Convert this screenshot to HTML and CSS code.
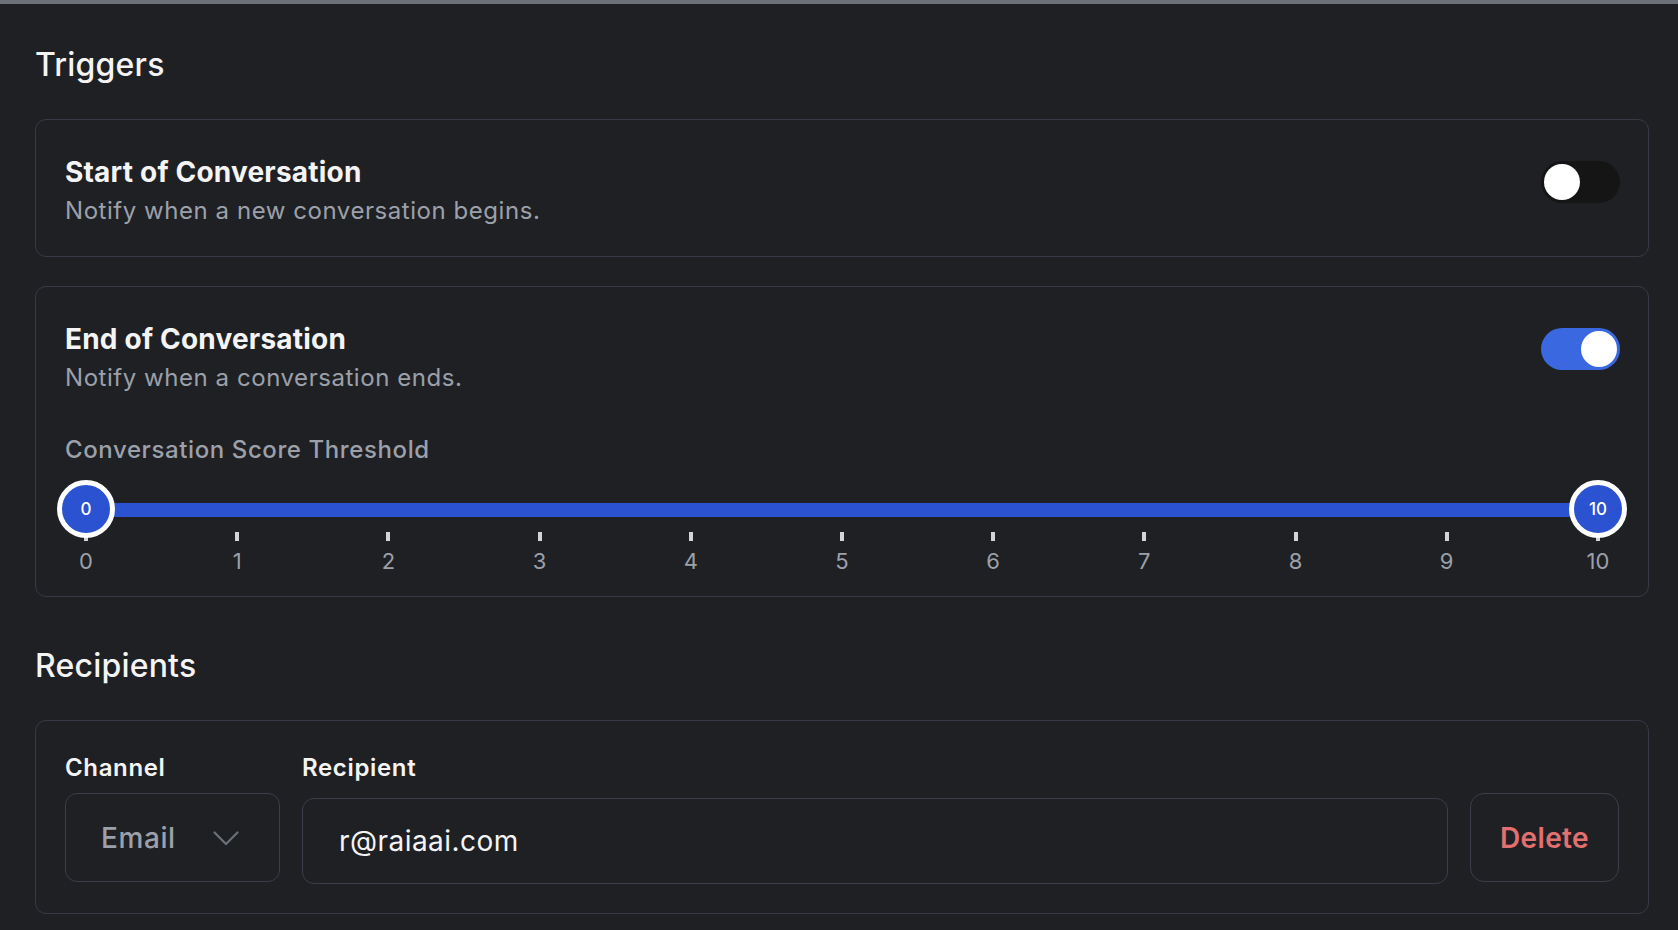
FILE: index.html
```html
<!DOCTYPE html>
<html lang="en">
<head>
<meta charset="utf-8">
<title>Triggers</title>
<link rel="stylesheet" href="styles.css">
</head>
<body>
<div class="topbar"></div>
<main class="page">
  <h2 class="section-title">Triggers</h2>

  <section class="card">
    <div class="trigger-row">
      <div class="trigger-text">
        <h3 class="trigger-title">Start of Conversation</h3>
        <p class="trigger-desc">Notify when a new conversation begins.</p>
      </div>
      <span class="toggle"><span class="knob"></span></span>
    </div>
  </section>

  <section class="card card-slider">
    <div class="trigger-row">
      <div class="trigger-text">
        <h3 class="trigger-title">End of Conversation</h3>
        <p class="trigger-desc">Notify when a conversation ends.</p>
      </div>
      <span class="toggle toggle-on"><span class="knob"></span></span>
    </div>
    <div class="field-label">Conversation Score Threshold</div>
    <div class="slider">
      <div class="track-row">
        <div class="track"></div>
        <span class="thumb thumb-min">0</span>
        <span class="thumb thumb-max">10</span>
      </div>
      <div class="scale">
        <div class="step"><span class="tick"></span><span class="num">0</span></div>
        <div class="step"><span class="tick"></span><span class="num">1</span></div>
        <div class="step"><span class="tick"></span><span class="num">2</span></div>
        <div class="step"><span class="tick"></span><span class="num">3</span></div>
        <div class="step"><span class="tick"></span><span class="num">4</span></div>
        <div class="step"><span class="tick"></span><span class="num">5</span></div>
        <div class="step"><span class="tick"></span><span class="num">6</span></div>
        <div class="step"><span class="tick"></span><span class="num">7</span></div>
        <div class="step"><span class="tick"></span><span class="num">8</span></div>
        <div class="step"><span class="tick"></span><span class="num">9</span></div>
        <div class="step"><span class="tick"></span><span class="num">10</span></div>
      </div>
    </div>
  </section>

  <h2 class="section-title recipients-title">Recipients</h2>

  <section class="card card-recipients">
    <div class="recipient-row">
      <div class="col-channel">
        <div class="col-label">Channel</div>
        <div class="select">
          <span class="select-value">Email</span>
          <svg class="chevron" width="26" height="15" viewBox="0 0 26 15" fill="none">
            <path d="M1.5 1.5 L13 13 L24.5 1.5" stroke="#6b7079" stroke-width="2.2" stroke-linecap="round" stroke-linejoin="round"/>
          </svg>
        </div>
      </div>
      <div class="col-recipient">
        <div class="col-label">Recipient</div>
        <div class="input">r@raiaai.com</div>
      </div>
      <button class="delete-btn" type="button">Delete</button>
    </div>
  </section>
</main>
</body>
</html>
```

FILE: styles.css
```css
* { box-sizing: border-box; }

html, body {
  margin: 0;
  padding: 0;
  background: #1f2024;
  font-family: Inter, "Noto Sans", "Liberation Sans", sans-serif;
  color: #f4f4f5;
}

body { height: 930px; overflow: hidden; }

.topbar {
  height: 4px;
  background: #6b7079;
}

.page {
  padding: 37px 29px 0 35px;
}

.section-title {
  margin: 0 0 30px;
  font-size: 32px;
  line-height: 48px;
  font-weight: 500;
  color: #f4f4f5;
  letter-spacing: 0.2px;
}

.recipients-title {
  margin-top: 45px;
  margin-bottom: 30px;
}

.card {
  border: 1px solid #363a45;
  border-radius: 11px;
  padding: 29px 29px 27px;
  background: #1f2024;
}

.card + .card { margin-top: 29px; }

.trigger-row {
  display: flex;
  justify-content: space-between;
  align-items: flex-start;
}

.trigger-text { padding-top: 2px; }

.trigger-title {
  margin: 0;
  font-size: 28px;
  line-height: 42px;
  font-weight: 700;
  color: #f4f4f5;
  letter-spacing: 0.2px;
}

.trigger-desc {
  margin: 0;
  font-size: 24px;
  line-height: 36px;
  font-weight: 400;
  color: #9ca0aa;
  letter-spacing: 0.55px;
}

.toggle {
  margin-top: 12px;
  width: 79px;
  height: 42px;
  border-radius: 21px;
  background: #151516;
  padding: 3px;
  display: flex;
  justify-content: flex-start;
  margin-right: -1px;
}

.toggle-on {
  background: #3a68e0;
  justify-content: flex-end;
}

.knob {
  width: 36px;
  height: 36px;
  border-radius: 50%;
  background: #ffffff;
}

.card-slider { padding-bottom: 18px; }

.field-label {
  margin-top: 36px;
  font-size: 24px;
  line-height: 36px;
  font-weight: 500;
  color: #9ca0aa;
  letter-spacing: 0.6px;
}

.slider {
  margin-top: 12px;
  position: relative;
}

.track-row {
  position: relative;
  height: 58px;
  padding: 0 21px;
  display: flex;
  align-items: center;
}

.track {
  flex: 1;
  height: 14px;
  margin-top: 2px;
  background: #2b52d0;
}

.thumb {
  position: absolute;
  top: 0;
  width: 58px;
  height: 58px;
  border-radius: 50%;
  border: 5px solid #ffffff;
  background: #2b52d0;
  color: #ffffff;
  font-size: 17px;
  font-weight: 500;
  display: flex;
  align-items: center;
  justify-content: center;
  z-index: 2;
}

.thumb-min { left: -8px; }
.thumb-max { right: -8px; }

.scale {
  margin-top: -6px;
  display: flex;
  justify-content: space-between;
}

.step {
  width: 42px;
  display: flex;
  flex-direction: column;
  align-items: center;
}

.tick {
  width: 4px;
  height: 9px;
  background: #d4d4d8;
}

.num {
  margin-top: 4px;
  font-size: 22px;
  line-height: 33px;
  color: #9ca0aa;
}

.card-recipients { padding-bottom: 29px; }

.recipient-row {
  display: flex;
  align-items: flex-start;
  gap: 22px;
}

.col-channel { width: 215px; }

.col-recipient { flex: 1; }

.col-label {
  font-size: 24px;
  line-height: 36px;
  font-weight: 600;
  color: #f4f4f5;
  letter-spacing: 0.65px;
}

.select {
  margin-top: 7px;
  height: 89px;
  border: 1px solid #3a3e49;
  border-radius: 12px;
  padding-left: 35px;
  display: flex;
  align-items: center;
}

.select-value {
  font-size: 28px;
  font-weight: 500;
  color: #9ca0aa;
  letter-spacing: 0.6px;
}

.chevron {
  margin-left: 37px;
  margin-top: 2px;
}

.input {
  margin-top: 12px;
  height: 86px;
  border: 1px solid #3a3e49;
  border-radius: 12px;
  padding-left: 36px;
  display: flex;
  align-items: center;
  font-size: 28px;
  font-weight: 400;
  color: #f4f4f5;
  letter-spacing: 0.45px;
}

.delete-btn {
  margin-top: 43px;
  width: 149px;
  height: 89px;
  border: 1px solid #3a3e49;
  border-radius: 14px;
  background: transparent;
  font-family: Inter, "Noto Sans", "Liberation Sans", sans-serif;
  font-size: 28px;
  font-weight: 600;
  color: #e27070;
  letter-spacing: 0.35px;
  padding: 0;
}
```
